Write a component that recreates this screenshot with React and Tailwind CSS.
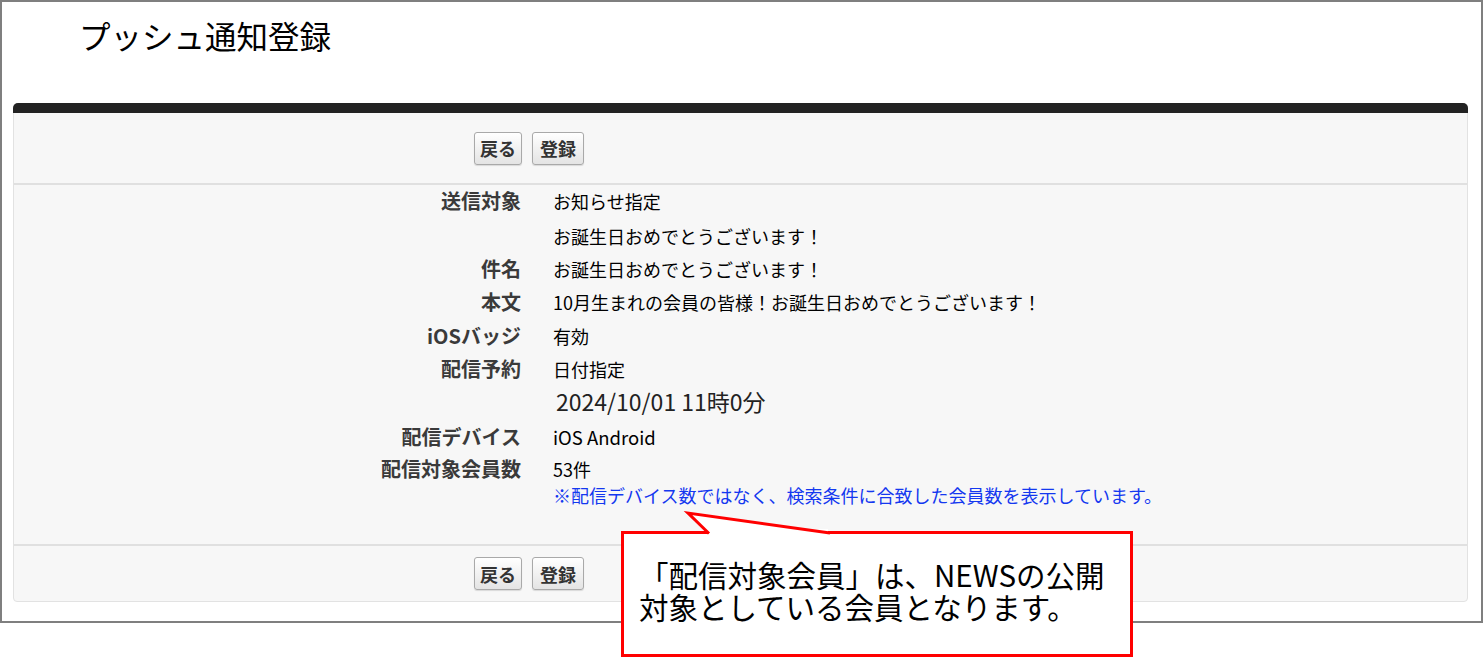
const FONT = "font-['Noto_Sans_CJK_JP','Noto_Sans',sans-serif]";

function Btn({ children, w }) {
  return (
    <button
      className={`${w} h-[33px] rounded-[3px] border border-[#a9a9a9] bg-linear-to-b from-white to-[#e4e4e4] text-[18px] leading-none font-bold text-[#333] shadow-[0_1px_1px_rgba(0,0,0,0.12)]`}
    >
      {children}
    </button>
  );
}

function ButtonRow({ className }) {
  return (
    <div className={`flex items-center gap-[10px] pl-[460px] ${className}`}>
      <Btn w="w-[48px]">戻る</Btn>
      <Btn w="w-[52px]">登録</Btn>
    </div>
  );
}

function Row({ label, children, className }) {
  return (
    <div className={`flex items-center ${className}`}>
      <div className="w-[507px] text-right text-[20px] font-bold text-[#3a3a3a] leading-none">{label}</div>
      <div className="ml-[32px] text-[18px] text-black leading-none whitespace-nowrap">{children}</div>
    </div>
  );
}

export default function App() {
  return (
    <div className={`relative w-[1484px] h-[657px] bg-white overflow-hidden ${FONT}`}>
      <div className="w-[1483px] h-[623px] border-2 border-[#7f7f7f]">
        <div className="h-[101px] pl-[77px] pt-[14px] text-[31.5px] leading-[38px] font-normal text-black">
          プッシュ通知登録
        </div>

        <div className="ml-[11px] w-[1455px] rounded-[4px] border border-[#e2e2e2] bg-[#f7f7f7]">
          <div className="h-[10px] -mx-px -mt-px rounded-t-[5px] bg-[#222]" />
          <ButtonRow className="h-[72px] border-b-2 border-[#e0e0e0]" />

          <div className="h-[361px] border-b-2 border-[#e0e0e0]">
            <Row label="送信対象" className="h-[31px]">お知らせ指定</Row>
            <Row label="" className="h-[33px] mt-[3px]">お誕生日おめでとうございます！</Row>
            <Row label="件名" className="h-[33px]">お誕生日おめでとうございます！</Row>
            <Row label="本文" className="h-[33px]">10月生まれの会員の皆様！お誕生日おめでとうございます！</Row>
            <Row label="iOSバッジ" className="h-[33px] mt-[1px]">有効</Row>
            <Row label="配信予約" className="h-[33px]">日付指定</Row>
            <Row label="" className="h-[33px]">
              <span className="ml-[3px] text-[23px] text-[#222]">2024/10/01 11時0分</span>
            </Row>
            <Row label="配信デバイス" className="h-[32px] mt-[3px]">
              <span className="text-[18.5px]">iOS Android</span>
            </Row>
            <Row label="配信対象会員数" className="h-[32px]">53件</Row>
            <Row label="" className="h-[20px]">
              <span className="text-[18px] text-[#1438f0]">※配信デバイス数ではなく、検索条件に合致した会員数を表示しています。</span>
            </Row>
          </div>

          <ButtonRow className="h-[55px]" />
        </div>
      </div>

      {/* callout */}
      <div className="absolute left-[621px] top-[531px] w-[512px] h-[126px] border-[3px] border-[#ff0000] bg-white pl-[15px] pt-[24px] text-[29.5px] leading-[32px] text-black whitespace-nowrap">
        <div>「配信対象会員」は、NEWSの公開</div>
        <div>対象としている会員となります。</div>
      </div>
      <svg className="absolute left-[680px] top-[505px]" width="160" height="32" viewBox="0 0 160 32">
        <polygon points="8,8 29,29 150,29" fill="#fff" />
        <rect x="30" y="24" width="118" height="7" fill="#fff" />
        <polyline points="29,28.5 8,8 150,28" fill="none" stroke="#ff0000" strokeWidth="3" strokeLinejoin="miter" />
      </svg>
    </div>
  );
}
